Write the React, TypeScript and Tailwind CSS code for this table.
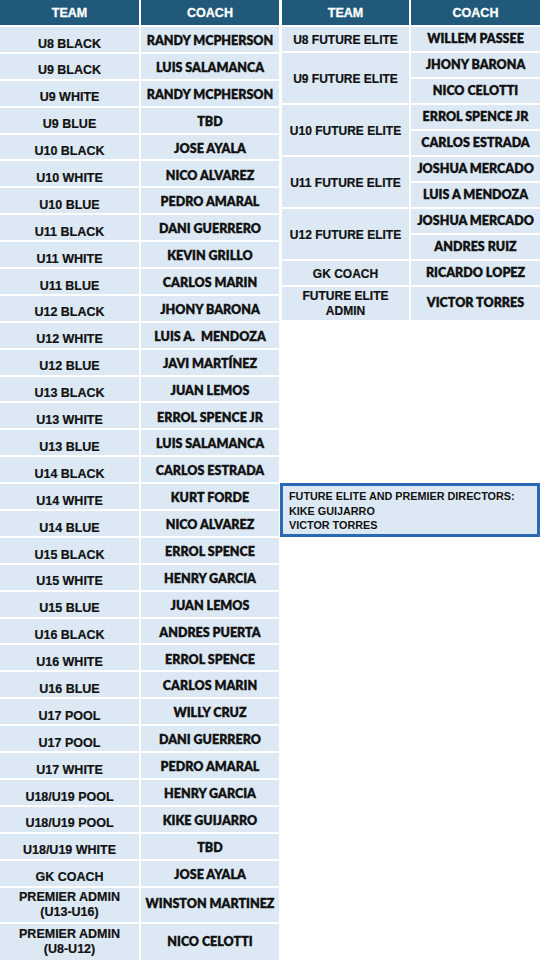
const left: [string, string][] = [
  ["U8 BLACK", "RANDY MCPHERSON"],
  ["U9 BLACK", "LUIS SALAMANCA"],
  ["U9 WHITE", "RANDY MCPHERSON"],
  ["U9 BLUE", "TBD"],
  ["U10 BLACK", "JOSE AYALA"],
  ["U10 WHITE", "NICO ALVAREZ"],
  ["U10 BLUE", "PEDRO AMARAL"],
  ["U11 BLACK", "DANI GUERRERO"],
  ["U11 WHITE", "KEVIN GRILLO"],
  ["U11 BLUE", "CARLOS MARIN"],
  ["U12 BLACK", "JHONY BARONA"],
  ["U12 WHITE", "LUIS A.  MENDOZA"],
  ["U12 BLUE", "JAVI MARTÍNEZ"],
  ["U13 BLACK", "JUAN LEMOS"],
  ["U13 WHITE", "ERROL SPENCE JR"],
  ["U13 BLUE", "LUIS SALAMANCA"],
  ["U14 BLACK", "CARLOS ESTRADA"],
  ["U14 WHITE", "KURT FORDE"],
  ["U14 BLUE", "NICO ALVAREZ"],
  ["U15 BLACK", "ERROL SPENCE"],
  ["U15 WHITE", "HENRY GARCIA"],
  ["U15 BLUE", "JUAN LEMOS"],
  ["U16 BLACK", "ANDRES PUERTA"],
  ["U16 WHITE", "ERROL SPENCE"],
  ["U16 BLUE", "CARLOS MARIN"],
  ["U17 POOL", "WILLY CRUZ"],
  ["U17 POOL", "DANI GUERRERO"],
  ["U17 WHITE", "PEDRO AMARAL"],
  ["U18/U19 POOL", "HENRY GARCIA"],
  ["U18/U19 POOL", "KIKE GUIJARRO"],
  ["U18/U19 WHITE", "TBD"],
  ["GK COACH", "JOSE AYALA"],
];

const teamFont =
  "[font-family:'Liberation_Sans',Arial,sans-serif] font-bold text-[#111] [-webkit-text-stroke:0.2px_#111]";
const coachFont =
  "[font-family:Lato,'Liberation_Sans',sans-serif] font-extrabold text-[#111] whitespace-pre [-webkit-text-stroke:0.3px_#111]";
const cell = "bg-[#dce9f5] flex items-center justify-center text-center";

function Header({ teamW, coachW }: { teamW: string; coachW: string }) {
  return (
    <div className="flex gap-[2px] h-[25px] shrink-0">
      <div className={`${teamW} bg-[#21597b] flex items-center justify-center pt-[1px] text-white text-[12.5px] font-bold [font-family:'Liberation_Sans',Arial,sans-serif] [-webkit-text-stroke:0.3px_#fff]`}>
        TEAM
      </div>
      <div className={`${coachW} bg-[#21597b] flex items-center justify-center pt-[1px] text-white text-[12.5px] font-bold [font-family:'Liberation_Sans',Arial,sans-serif] [-webkit-text-stroke:0.3px_#fff]`}>
        COACH
      </div>
    </div>
  );
}

function LeftTable() {
  return (
    <div className="w-[279px] flex flex-col gap-[2px]">
      <Header teamW="w-[139px]" coachW="w-[138px]" />
      {left.map(([team, coach], i) => (
        <div key={i} className="flex gap-[2px] h-[24.9px] shrink-0">
          <div className={`${cell} w-[139px] pt-[9px] text-[12.5px] ${teamFont}`}>{team}</div>
          <div className={`${cell} w-[138px] pt-[4px] text-[12.5px] ${coachFont}`}>{coach}</div>
        </div>
      ))}
      <div className="flex gap-[2px] h-[34px] shrink-0">
        <div className={`${cell} w-[139px] text-[12.5px] leading-[15px] ${teamFont}`}>
          PREMIER ADMIN
          <br />
          (U13-U16)
        </div>
        <div className={`${cell} w-[138px] text-[12.5px] ${coachFont}`}>WINSTON MARTINEZ</div>
      </div>
      <div className="flex gap-[2px] h-[37px] shrink-0">
        <div className={`${cell} w-[139px] text-[12.5px] leading-[15px] ${teamFont}`}>
          PREMIER ADMIN
          <br />
          (U8-U12)
        </div>
        <div className={`${cell} w-[138px] text-[12.5px] ${coachFont}`}>NICO CELOTTI</div>
      </div>
    </div>
  );
}

function Group({ team, coaches }: { team: string; coaches: string[] }) {
  return (
    <div className="flex gap-[2px]">
      <div className={`${cell} w-[127px] pt-[1px] text-[12px] ${teamFont}`}>{team}</div>
      <div className="w-[129px] flex flex-col gap-[2px]">
        {coaches.map((c) => (
          <div key={c} className={`${cell} h-[24px] pt-[1px] text-[12.5px] ${coachFont}`}>
            {c}
          </div>
        ))}
      </div>
    </div>
  );
}

function RightTable() {
  return (
    <div className="w-[258px] flex flex-col gap-[2px]">
      <Header teamW="w-[127px]" coachW="w-[129px]" />
      <Group team="U8 FUTURE ELITE" coaches={["WILLEM PASSEE"]} />
      <Group team="U9 FUTURE ELITE" coaches={["JHONY BARONA", "NICO CELOTTI"]} />
      <Group team="U10 FUTURE ELITE" coaches={["ERROL SPENCE JR", "CARLOS ESTRADA"]} />
      <Group team="U11 FUTURE ELITE" coaches={["JOSHUA MERCADO", "LUIS A MENDOZA"]} />
      <Group team="U12 FUTURE ELITE" coaches={["JOSHUA MERCADO", "ANDRES RUIZ"]} />
      <Group team="GK COACH" coaches={["RICARDO LOPEZ"]} />
      <div className="flex gap-[2px] h-[33px]">
        <div className={`${cell} w-[127px] text-[12px] leading-[15px] ${teamFont}`}>
          FUTURE ELITE
          <br />
          ADMIN
        </div>
        <div className={`${cell} w-[129px] text-[12.5px] ${coachFont}`}>VICTOR TORRES</div>
      </div>
    </div>
  );
}

export default function App() {
  return (
    <div className="w-[540px] h-[960px] bg-white flex gap-[3px] overflow-hidden">
      <LeftTable />
      <div className="flex flex-col">
        <RightTable />
        <div className="mt-[163px] -ml-[2px] w-[260px] h-[54px] bg-[#dce9f5] border-[3px] border-[#2a6ab4] px-[6px] pt-[3px] text-[10.8px] leading-[14.5px] font-bold text-[#111] [font-family:'Liberation_Sans',Arial,sans-serif]">
          FUTURE ELITE AND PREMIER DIRECTORS:
          <br />
          KIKE GUIJARRO
          <br />
          VICTOR TORRES
        </div>
      </div>
    </div>
  );
}
